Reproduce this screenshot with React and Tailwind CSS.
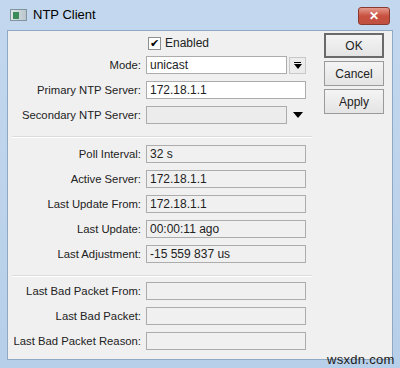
import React from 'react';

const font = { fontFamily: '"Liberation Sans", Arial, sans-serif' };

const Field = ({ label, value, white }) => (
    <div className="flex items-center h-[18px]">
        <div className="w-[138px] text-right pr-[5px] text-[11.3px] text-[#222] whitespace-nowrap">{label}</div>
        <div
            className={`h-[18px] w-[160px] border border-[#acacac] flex items-center px-[3px] text-[12px] text-[#222] ${white ? 'bg-white' : 'bg-[#f0f0f0]'}`}
        >
            {value}
        </div>
    </div>
);

const Btn = ({ label, def }) => (
    <div
        className={`w-[60px] h-[25px] flex items-center justify-center text-[12px] text-[#222] bg-gradient-to-b from-[#f4f4f4] to-[#e4e4e4] ${def ? 'border-2 border-[#6a6a6a]' : 'border border-[#9a9a9a]'}`}
    >
        {label}
    </div>
);

export default function App() {
    return (
        <div className="relative w-[400px] h-[368px] overflow-hidden bg-gradient-to-b from-[#c3d8ee] to-[#b7cfe9] flex flex-col" style={font}>
            {/* title bar */}
            <div className="h-[30px] flex items-center pl-[10px] pr-[10px] shrink-0">
                <div className="w-[17px] h-[12px] bg-gradient-to-r from-[#dfe6ea] to-[#b9c6cc] border border-[#7f949c] flex items-center pl-[2px]">
                    <div className="w-[6px] h-[7px] bg-[#3b8a5a]" />
                </div>
                <span className="ml-[6px] text-[13px] text-black">NTP Client</span>
                <div className="ml-auto mt-[2px] w-[32px] h-[18px] rounded-[3px] border border-[#8a3a30] bg-gradient-to-b from-[#e49a8e] via-[#c8503f] to-[#c05040] flex items-center justify-center">
                    <span className="text-white text-[12px] font-bold leading-none">✕</span>
                </div>
            </div>

            {/* content */}
            <div className="mx-[7px] h-[330px] bg-[#f0f0f0] border border-[#8fa9c4] flex shrink-0">
                <div className="w-[310px] flex flex-col pt-[5px]">
                    <div className="flex items-center h-[14px] ml-[140px]">
                        <div className="w-[13px] h-[13px] border border-[#8f8f8f] bg-white flex items-center justify-center text-[11px] leading-none text-black">✔</div>
                        <span className="ml-[4px] text-[12px] text-[#222]">Enabled</span>
                    </div>
                    <div className="flex flex-col gap-[7px] mt-[6px]">
                        <div className="flex items-center h-[18px]">
                            <div className="w-[138px] text-right pr-[5px] text-[11.3px] text-[#222]">Mode:</div>
                            <div className="h-[18px] w-[141px] border border-[#acacac] bg-white flex items-center px-[3px] text-[12px] text-[#222]">unicast</div>
                            <div className="ml-[2px] w-[17px] h-[17px] border border-[#c8c8c8] bg-[#ececec] flex flex-col items-center justify-center">
                                <div className="w-[7px] h-[1px] bg-black" />
                                <svg width="8" height="5" viewBox="0 0 8 5" className="mt-[1px]"><path d="M0 0h8L4 5z" fill="#000" /></svg>
                            </div>
                        </div>
                        <Field label="Primary NTP Server:" value="172.18.1.1" white />
                        <div className="flex items-center h-[18px]">
                            <div className="w-[138px] text-right pr-[5px] text-[11.3px] text-[#222]">Secondary NTP Server:</div>
                            <div className="h-[18px] w-[141px] border border-[#acacac] bg-[#ececec]" />
                            <svg width="10" height="6" viewBox="0 0 10 6" className="ml-[6px]"><path d="M0 0h10L5 6z" fill="#000" /></svg>
                        </div>
                    </div>
                    <div className="mt-[12px] ml-[4px] w-[300px] border-t border-[#dcdcdc] border-b border-b-white" />
                    <div className="flex flex-col gap-[7px] mt-[7px]">
                        <Field label="Poll Interval:" value="32 s" />
                        <Field label="Active Server:" value="172.18.1.1" />
                        <Field label="Last Update From:" value="172.18.1.1" />
                        <Field label="Last Update:" value="00:00:11 ago" />
                        <Field label="Last Adjustment:" value="-15 559 837 us" />
                    </div>
                    <div className="mt-[12px] ml-[4px] w-[300px] border-t border-[#dcdcdc] border-b border-b-white" />
                    <div className="flex flex-col gap-[7px] mt-[5px]">
                        <Field label="Last Bad Packet From:" value="" />
                        <Field label="Last Bad Packet:" value="" />
                        <Field label="Last Bad Packet Reason:" value="" />
                    </div>
                </div>
                <div className="flex flex-col gap-[3px] pt-[2px] ml-[6px]">
                    <Btn label="OK" def />
                    <Btn label="Cancel" />
                    <Btn label="Apply" />
                </div>
            </div>

            <div className="absolute left-[327px] top-[350px] text-[13px] text-[#1a1a1a] tracking-[0.3px]">wsxdn.com</div>
        </div>
    );
}
